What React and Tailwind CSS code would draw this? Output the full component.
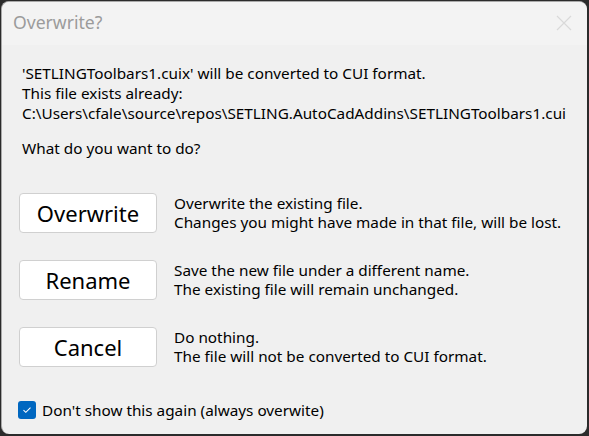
import React from 'react';

const options = [
  {
    label: 'Overwrite',
    lines: ['Overwrite the existing file.', 'Changes you might have made in that file, will be lost.'],
  },
  {
    label: 'Rename',
    lines: ['Save the new file under a different name.', 'The existing file will remain unchanged.'],
  },
  {
    label: 'Cancel',
    lines: ['Do nothing.', 'The file will not be converted to CUI format.'],
  },
];

const font = { fontFamily: '"Segoe UI", "Noto Sans", sans-serif' };

export default function App() {
  return (
    <div className="w-[589px] h-[436px] bg-[#2b2b2b] overflow-hidden" style={font}>
      <div className="ml-px mt-px w-[586px] h-[433px] bg-[#f0f0f0] rounded-lg border border-[#a9a9a9] border-r-0 border-b-0 overflow-hidden flex flex-col">
        {/* Title bar */}
        <div className="h-[43px] bg-[#f3f3f3] flex items-center justify-between pl-[11px] pr-[15px] shrink-0">
          <span className="text-[17.6px] text-[#9b9b9b] leading-none -mt-[1px]">Overwrite?</span>
          <svg width="16" height="16" viewBox="0 0 16 16" className="-mt-[1px]">
            <path d="M1 1 L15 15 M15 1 L1 15" stroke="#d9d9d9" strokeWidth="1.2" />
          </svg>
        </div>

        {/* Body */}
        <div className="flex-1 flex flex-col pl-[20px] pt-[18px] text-[15.3px] leading-[20px] text-black">
          <p>'SETLINGToolbars1.cuix' will be converted to CUI format.</p>
          <p>This file exists already:</p>
          <p>C:\Users\cfale\source\repos\SETLING.AutoCadAddins\SETLINGToolbars1.cui</p>
          <p className="mt-[15px]">What do you want to do?</p>

          <div className="mt-[35px] -ml-[3px] flex flex-col gap-[27px]">
            {options.map((o) => (
              <div key={o.label} className="flex items-start gap-[17px]">
                <button className="w-[138px] h-[40px] bg-white border border-[#d0d0d0] rounded-[4px] text-[22px] text-black leading-none">
                  {o.label}
                </button>
                <div className="leading-[19px] pt-[1px]">
                  {o.lines.map((l) => (
                    <p key={l}>{l}</p>
                  ))}
                </div>
              </div>
            ))}
          </div>

          <label className="mt-[33px] -ml-[4px] flex items-center gap-[6px]">
            <span className="w-[18px] h-[18px] rounded-[3px] bg-[#0067c0] flex items-center justify-center">
              <svg width="10" height="8" viewBox="0 0 10 8">
                <path d="M1.5 4.2 L3.8 6.3 L8.5 1.7" fill="none" stroke="white" strokeWidth="1.1" />
              </svg>
            </span>
            <span>Don't show this again (always overwite)</span>
          </label>
        </div>
      </div>
    </div>
  );
}
